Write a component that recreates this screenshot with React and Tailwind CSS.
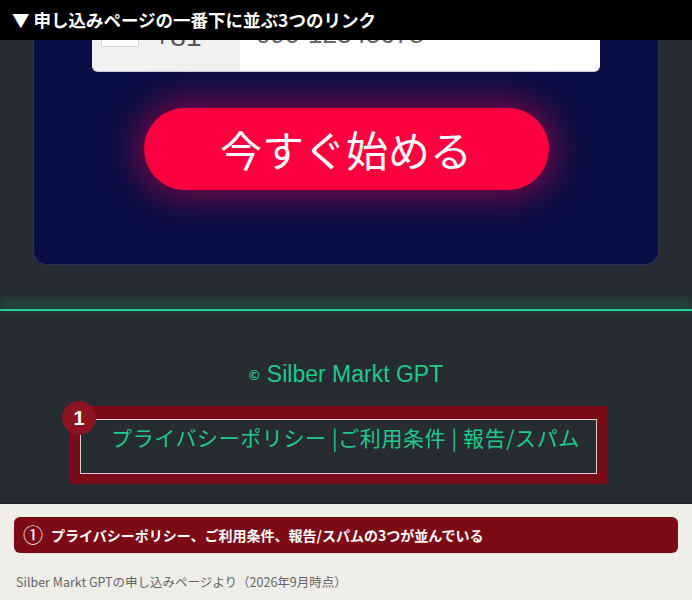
import React from 'react'

const jp = { fontFamily: '"Noto Sans CJK JP", "Noto Sans", sans-serif' }
const latin = { fontFamily: '"Liberation Sans", sans-serif' }

function PhoneInput() {
  return (
    <div className="mx-[58px] flex h-[70px] overflow-hidden rounded-b-md bg-white shadow-[0_1px_0_#c9cbe0]">
      <div className="flex w-[148px] items-start gap-[15px] bg-[#f1f1f1] pl-[9px] pt-[22px]">
        <div className="h-[24px] w-[38px] border border-[#d6d6d6] bg-white" />
        <span className="text-[28px] leading-none text-[#555]" style={latin}>+81</span>
      </div>
      <div className="flex items-start pl-[16px] pt-[20px]">
        <span className="text-[26px] leading-none text-[#666]" style={latin}>090-12345678</span>
      </div>
    </div>
  )
}

export default function App() {
  return (
    <div className="relative h-[600px] w-[692px] overflow-hidden bg-[#262c31]" style={jp}>
      {/* caption bar laid over the page top */}
      <div className="absolute inset-x-0 top-0 z-10 flex h-[40px] items-center bg-black pl-[12px]">
        <span className="text-[17.5px] font-bold text-white">▼ 申し込みページの一番下に並ぶ3つのリンク</span>
      </div>

      <div className="flex h-[503px] flex-col">
        <div className="mx-[33px] h-[265px] rounded-b-[14px] border-x border-b border-[#2c3168] bg-[#090e45] pt-[1px]">
          <PhoneInput />
          <div className="mt-[37px] flex justify-center">
            <div className="flex h-[82px] w-[405px] items-center justify-center rounded-full bg-[#fb003e] shadow-[0_0_34px_8px_rgba(255,0,70,0.45)]">
              <span className="text-[42px] leading-none text-white">今すぐ始める</span>
            </div>
          </div>
        </div>

        <div className="mt-[44px] h-[2px] bg-[#1fd594] shadow-[0_-5px_12px_1px_rgba(31,213,148,0.45)]" />

        <div className="mt-[52px] flex items-center justify-center gap-[7px] text-[#1fc98d]">
          <span className="text-[13px] font-bold leading-none">©</span>
          <span className="text-[23px] leading-none" style={latin}>Silber Markt GPT</span>
        </div>

        <div className="relative mx-[70px] mt-[20px] h-[78px] w-[537px] border-[10px] border-t-[13px] border-[#7a0b17]">
          <div className="flex h-full justify-center border border-[#d8d0d0] pt-[3px]">
            <span className="pl-[14px] text-[21px] leading-[28px] tracking-[0.6px] text-[#1fc98d]">プライバシーポリシー |ご利用条件 | 報告/スパム</span>
          </div>
          <div className="absolute left-[-18px] top-[-18px] flex h-[34px] w-[34px] items-center justify-center rounded-full bg-[#8a1420]">
            <span className="text-[20px] font-bold leading-none text-white" style={latin}>1</span>
          </div>
        </div>
      </div>

      <div className="h-[97px] border-t border-[#1d2226] bg-[#efede8] px-[14px] pt-[13px]">
        <div className="flex h-[36px] items-center gap-[8px] rounded-md bg-[#7c0b16] px-[9px]">
          <span className="text-[20px] leading-none text-white">①</span>
          <span className="text-[14px] font-bold leading-none text-white">プライバシーポリシー、ご利用条件、報告/スパムの3つが並んでいる</span>
        </div>
        <p className="mt-[20px] pl-[2px] text-[12.5px] text-[#666]">Silber Markt GPTの申し込みページより（2026年9月時点）</p>
      </div>
    </div>
  )
}
